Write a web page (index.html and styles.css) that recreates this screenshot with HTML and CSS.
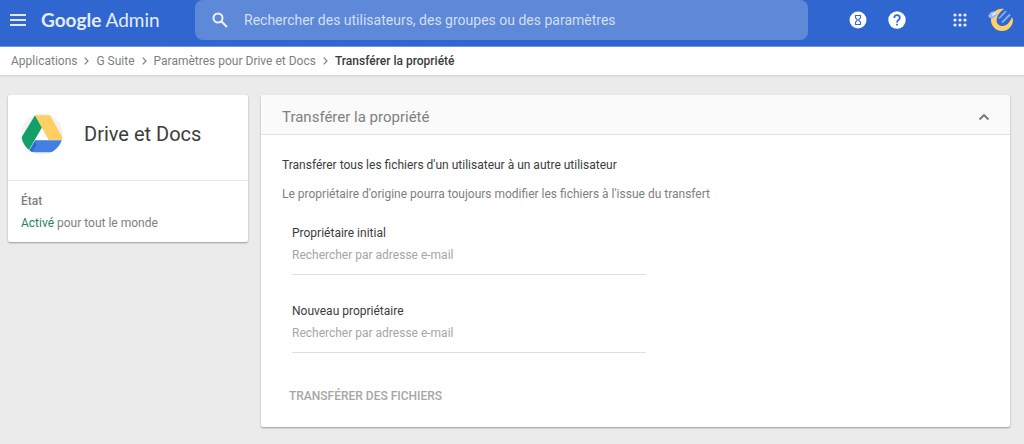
FILE: index.html
```html
<!DOCTYPE html>
<html lang="fr">
<head>
  <meta charset="UTF-8" />
  <title>Transférer la propriété</title>
  <meta name="viewport" content="width=device-width, initial-scale=1" />
  <link rel="stylesheet" href="styles.css">
</head>
<body>
  <header class="topbar">
    <div class="brand">
      <button class="icon-btn" type="button" aria-label="Menu">
        <svg width="16" height="12" viewBox="0 0 16 12"><path d="M0 1h16M0 6h16M0 11h16" stroke="#fff" stroke-opacity=".85" stroke-width="2" /></svg>
      </button>
      <a class="logo" href="#"><span class="logo-google">Google</span> Admin</a>
    </div>

    <form class="search">
      <button class="icon-btn" type="button" aria-label="Rechercher">
        <svg width="16" height="16" viewBox="0 0 16 16"><g fill="none" stroke="#fff" stroke-opacity=".9" stroke-width="2"><circle cx="6" cy="6" r="4.5" /><path d="M9.5 9.5L15 15" /></g></svg>
      </button>
      <input class="search-input" type="text" aria-label="Recherche" placeholder="Rechercher des utilisateurs, des groupes ou des paramètres" />
    </form>

    <nav class="tools">
      <button class="icon-btn" type="button" aria-label="Tâches">
        <svg width="18" height="18" viewBox="0 0 18 18"><circle cx="9" cy="9" r="8.5" fill="#fff" /><path d="M6.5 4.5h5v2.200L9.6 9l1.900 2.300v2.200h-5v-2.200L8.400 9 6.500 6.700z" fill="none" stroke="#3367d6" stroke-width="1.1" /></svg>
      </button>
      <button class="icon-btn" type="button" aria-label="Aide">
        <svg width="18" height="18" viewBox="0 0 18 18"><circle cx="9" cy="9" r="8.7" fill="#fff" /><path d="M6.2 7C6.2 5.3 7.4 4.1 9 4.1s2.800 1.200 2.800 2.700C11.800 8.900 9 9 9 11.500" fill="none" stroke="#3367d6" stroke-width="1.8" /><path d="M8.1 12.700h1.800v1.900H8.100z" fill="#3367d6" /></svg>
      </button>
      <button class="icon-btn apps" type="button" aria-label="Applications Google">
        <svg width="14" height="14" viewBox="0 0 14 14" fill="#fff" fill-opacity=".9"><circle cx="2" cy="2" r="1.6" /><circle cx="7" cy="2" r="1.6" /><circle cx="12" cy="2" r="1.6" /><circle cx="2" cy="7" r="1.6" /><circle cx="7" cy="7" r="1.6" /><circle cx="12" cy="7" r="1.6" /><circle cx="2" cy="12" r="1.6" /><circle cx="7" cy="12" r="1.6" /><circle cx="12" cy="12" r="1.6" /></svg>
      </button>
      <button class="icon-btn" type="button" aria-label="Compte">
        <svg width="26" height="24" viewBox="0 0 26 24">
          <path d="M16 1C9 0 3 5 3 12a11 11 0 0 0 22 0l-1-3C22 14 19 18 14.500 18 7 18 6 8 16 1z" fill="#ffd166" />
          <path d="M0 8l3-4 4-1-1 2 4 1-3 3-3 2-2-1z" fill="#9dbaf0" />
          <path d="M4 7l4-2" stroke="#dce7fb" stroke-width="2" />
          <path d="M11 10.500l7-7.500M14 14.500l8-8" fill="none" stroke="#8fb0ec" stroke-width="1.8" />
        </svg>
      </button>
    </nav>
  </header>

  <nav class="breadcrumb">
    <a href="#">Applications</a>
    <svg width="5" height="8" viewBox="0 0 5 8"><path d="M.7.7L4 4 .7 7.3" /></svg>
    <a href="#">G Suite</a>
    <svg width="5" height="8" viewBox="0 0 5 8"><path d="M.7.7L4 4 .7 7.3" /></svg>
    <a href="#">Paramètres pour Drive et Docs</a>
    <svg width="5" height="8" viewBox="0 0 5 8"><path d="M.7.7L4 4 .7 7.3" /></svg>
    <span class="current">Transférer la propriété</span>
  </nav>

  <main class="content">
    <aside class="card app-card">
      <div class="app-head">
        <svg width="42" height="42" viewBox="0 0 126 126">
          <clipPath id="disc"><circle cx="63" cy="63" r="62" /></clipPath>
          <circle cx="63" cy="63" r="62" fill="#f3f3f3" />
          <g clip-path="url(#disc)">
            <path d="M63 47L83 81H43z" fill="#fff" />
            <path d="M42 7L63 43 22 114-2 79z" fill="#11a067" />
            <path d="M42 7H87L129 81H83z" fill="#ffcf63" />
            <path d="M43 82H128L98 118H22z" fill="#4380e3" />
            <path d="M43 82L46 98 32 118H22z" fill="#3367d6" />
          </g>
        </svg>
        <h1>Drive et Docs</h1>
      </div>
      <div class="app-status">
        <h2>État</h2>
        <p><span class="on">Activé</span> pour tout le monde</p>
      </div>
    </aside>

    <section class="card panel">
      <div class="panel-head">
        <h2>Transférer la propriété</h2>
        <button class="icon-btn" type="button" aria-label="Réduire">
          <svg width="12" height="8" viewBox="0 0 12 8"><path d="M1.5 6.5L6 2l4.5 4.5" fill="none" stroke="#757575" stroke-width="1.8" /></svg>
        </button>
      </div>
      <form class="panel-body">
        <h3>Transférer tous les fichiers d'un utilisateur à un autre utilisateur</h3>
        <p class="hint">Le propriétaire d'origine pourra toujours modifier les fichiers à l'issue du transfert</p>
        <div class="fields">
          <div class="field">
            <label for="from">Propriétaire initial</label>
            <input type="text" id="from" placeholder="Rechercher par adresse e-mail" />
          </div>
          <div class="field">
            <label for="to">Nouveau propriétaire</label>
            <input type="text" id="to" placeholder="Rechercher par adresse e-mail" />
          </div>
        </div>
        <button class="submit" type="button">TRANSFÉRER DES FICHIERS</button>
      </form>
    </section>
  </main>
</body>
</html>
```
FILE: styles.css
```css
:root {
  --blue: #3066d0;
  --line: #e0e0e0;
  --text: #3c3c3c;
  --muted: #808080;
  --placeholder: #a6a6a6;
}

* {
  box-sizing: border-box;
}

body {
  margin: 0;
  min-height: 100vh;
  font-family: Roboto, sans-serif;
  font-size: 12px;
  line-height: 16px;
  background: #ebebeb;
  color: var(--text);
}

h1, h2, h3, p {
  margin: 0;
  font-weight: 400;
}

button, input {
  font: inherit;
  border: none;
  padding: 0;
  background: transparent;
}

button {
  cursor: pointer;
}

.icon-btn {
  display: flex;
}

.topbar {
  display: flex;
  height: 47px;
  padding: 0 10px;
  background: var(--blue);
  border-bottom: 1px solid #6f98e4;
}

.brand {
  display: flex;
  align-items: center;
  gap: 15px;
  width: 185px;
  height: 40px;
}

.logo {
  font-family: Lato, sans-serif;
  font-size: 19px;
  line-height: 24px;
  color: #e4ecfa;
  text-decoration: none;
}

.logo-google {
  font-weight: 700;
}

.search {
  display: flex;
  align-items: center;
  gap: 16px;
  flex: 1;
  height: 40px;
  padding: 0 17px;
  border-radius: 8px;
  background: #5e88d8;
}

.search-input {
  flex: 1;
  font-size: 14px;
  color: #fff;
}

.search-input::placeholder {
  color: #d3dff5;
  opacity: 1;
}

.tools {
  display: flex;
  align-items: center;
  justify-content: flex-end;
  gap: 21px;
  width: 206px;
  height: 40px;
}

.apps {
  margin-left: 26px;
}

.breadcrumb {
  display: flex;
  align-items: center;
  gap: 7px;
  height: 28px;
  padding: 0 11px;
  background: #fff;
  box-shadow: 0 1px 2px rgba(0, 0, 0, 0.12);
}

.breadcrumb a {
  color: var(--muted);
  text-decoration: none;
}

.breadcrumb svg {
  fill: none;
  stroke: #808080;
  stroke-width: 1.2;
}

.current {
  font-weight: 500;
}

.content {
  display: flex;
  align-items: flex-start;
  gap: 13px;
  padding: 20px 14px 16px 8px;
}

.card {
  background: #fff;
  border-radius: 2px;
  box-shadow: 0 1px 2px rgba(0, 0, 0, 0.35);
}

.app-card {
  width: 240px;
}

.app-head {
  display: flex;
  align-items: center;
  gap: 21px;
  height: 86px;
  padding: 0 13px 8px;
  border-bottom: 1px solid #ebebeb;
}

.app-head h1 {
  font-size: 20px;
  line-height: 24px;
}

.app-status {
  padding: 12px 13px 11px;
  color: var(--muted);
}

.app-status h2 {
  margin-bottom: 6px;
  font-size: 12px;
  font-weight: 500;
}

.on {
  color: #23875c;
}

.panel {
  flex: 1;
}

.panel-head {
  display: flex;
  align-items: center;
  justify-content: space-between;
  height: 40px;
  padding: 4px 20px 0 21px;
  background: #fafafa;
  border-bottom: 1px solid var(--line);
  border-radius: 2px 2px 0 0;
}

.panel-head h2 {
  font-size: 15px;
  line-height: 20px;
  color: var(--muted);
}

.panel-body {
  padding: 22px 21px 23px;
}

.panel-body h3 {
  font-size: 12px;
}

.hint {
  margin-top: 13px;
  color: var(--muted);
}

.fields {
  display: grid;
  gap: 28px;
  width: 50%;
  margin: 23px 0 0 10px;
}

.field label {
  display: block;
}

.field input {
  display: block;
  width: 100%;
  height: 34px;
  padding-bottom: 6px;
  border-bottom: 1px solid var(--line);
}

.field input::placeholder {
  color: var(--placeholder);
  opacity: 1;
}

.submit {
  display: block;
  margin: 35px 0 0 7px;
  font-weight: 500;
  color: var(--placeholder);
}
```
